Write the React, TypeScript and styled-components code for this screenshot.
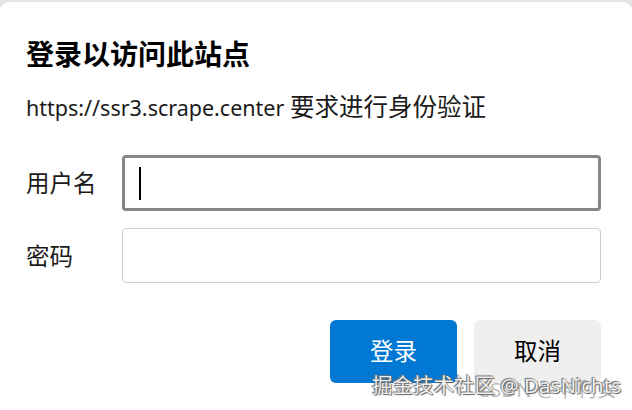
import { createGlobalStyle, styled } from 'styled-components';

const GlobalStyle = createGlobalStyle`
  html, body {
    margin: 0;
    padding: 0;
    background: #e6e6e6;
  }
  body {
    font-family: "Noto Sans", "Noto Sans CJK SC", sans-serif;
    color: #1a1a1a;
  }
`;

function App() {
  return (
    <>
      <GlobalStyle />
      <Page>
        <Dialog>
          <Title>登录以访问此站点</Title>
          <Subtitle>
            https://ssr3.scrape.center <Notice>要求进行身份验证</Notice>
          </Subtitle>

          <Form>
            <Row>
              <Label>用户名</Label>
              <Field $focused>
                <Caret />
              </Field>
            </Row>
            <Row>
              <Label>密码</Label>
              <Field />
            </Row>
          </Form>

          <Actions>
            <Button $primary>登录</Button>
            <Button>取消</Button>
          </Actions>

          <Watermark>
            <WatermarkBack>CSDN @卡利安</WatermarkBack>
            <WatermarkFront>掘金技术社区 @ DasNichts</WatermarkFront>
          </Watermark>
        </Dialog>
      </Page>
    </>
  );
}

export default App;

const Page = styled.div`
  width: 632px;
  height: 410px;
  padding-top: 2px;
  box-sizing: border-box;
  overflow: hidden;
`;

const Dialog = styled.div`
  position: relative;
  height: 408px;
  box-sizing: border-box;
  padding: 34px 31px 0 26px;
  background: #ffffff;
  border-radius: 9px 9px 0 0;
`;

const Title = styled.h1`
  margin: 0;
  font-size: 28px;
  line-height: 36px;
  font-weight: 700;
  color: #000;
`;

const Subtitle = styled.p`
  margin: 20px 0 0;
  font-size: 21.5px;
  line-height: 30px;
  color: #1a1a1a;
  white-space: nowrap;
`;

const Notice = styled.span`
  font-size: 24.5px;
`;

const Form = styled.div`
  display: flex;
  flex-direction: column;
  gap: 17px;
  margin-top: 32px;
`;

const Row = styled.div`
  display: flex;
  align-items: center;
`;

const Label = styled.label`
  width: 96px;
  flex-shrink: 0;
  font-size: 23.5px;
  line-height: 30px;
  color: #1a1a1a;
`;

const Field = styled.div<{ $focused?: boolean }>`
  flex: 1;
  display: flex;
  align-items: center;
  box-sizing: border-box;
  height: ${(p) => (p.$focused ? '56px' : '55px')};
  border: ${(p) => (p.$focused ? '3px solid #858585' : '1px solid #cfcfcf')};
  border-radius: 4px;
  background: #fff;
`;

const Caret = styled.span`
  width: 2px;
  height: 33px;
  margin-left: 14px;
  background: #000;
`;

const Actions = styled.div`
  display: flex;
  justify-content: flex-end;
  gap: 17px;
  margin-top: 37px;
`;

const Button = styled.button<{ $primary?: boolean }>`
  width: 127px;
  height: 63px;
  padding: 0 0 3px;
  border: none;
  border-radius: 6px;
  font-family: inherit;
  font-size: 23.5px;
  background: ${(p) => (p.$primary ? '#0078d4' : '#efefef')};
  color: ${(p) => (p.$primary ? '#ffffff' : '#000000')};
`;

const Watermark = styled.div`
  position: absolute;
  right: 11px;
  bottom: 12px;
  font-size: 20.5px;
  line-height: 26px;
`;

const WatermarkBack = styled.span`
  position: absolute;
  right: 4px;
  top: 4px;
  color: rgba(120, 120, 120, 0.5);
  white-space: nowrap;
`;

const WatermarkFront = styled.span`
  position: relative;
  color: rgba(255, 255, 255, 0.92);
  white-space: nowrap;
  text-shadow: 0 0 1px #555, 1px 1px 1px #666, -1px -1px 1px #777;
`;
